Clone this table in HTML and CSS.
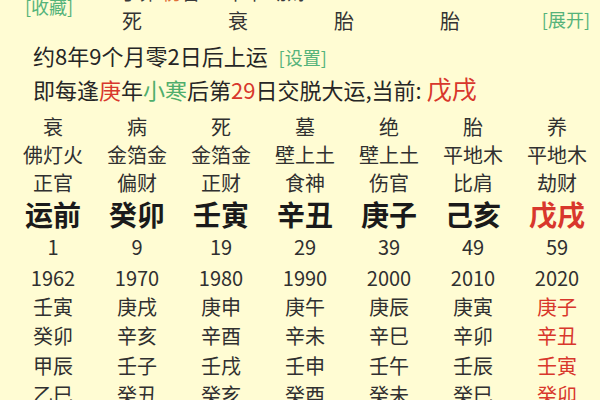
FILE: index.html
```html
<!DOCTYPE html>
<html lang="zh-CN">
<head>
<meta charset="utf-8">
<title>大运</title>
<link rel="stylesheet" href="styles.css">
</head>
<body>
<div class="page">
  <div class="top">
    <div class="fav link">[收藏]</div>
    <div class="frag"><span>丁卯</span> <span class="orange">伤</span>官</div>
    <div class="frag"><span>甲午</span> 劫财</div>
    <div class="frag"></div>
    <div class="frag"></div>
    <div class="frag"></div>
    <div class="stage">死</div>
    <div class="stage">衰</div>
    <div class="stage">胎</div>
    <div class="stage">胎</div>
    <div class="expand link">[展开]</div>
  </div>
  <div class="line l1">约8年9个月零2日后上运 <span class="link small">[设置]</span></div>
  <div class="line l2">即每逢<span class="red">庚</span>年<span class="green">小寒</span>后第<span class="red">29</span>日交脱大运,当前: <span class="red big">戊戌</span></div>
  <div class="grid">
    <div>衰</div><div>病</div><div>死</div><div>墓</div><div>绝</div><div>胎</div><div>养</div>
    <div>佛灯火</div><div>金箔金</div><div>金箔金</div><div>壁上土</div><div>壁上土</div><div>平地木</div><div>平地木</div>
    <div>正官</div><div>偏财</div><div>正财</div><div>食神</div><div>伤官</div><div>比肩</div><div>劫财</div>
    <div class="gz">运前</div><div class="gz">癸卯</div><div class="gz">壬寅</div><div class="gz">辛丑</div><div class="gz">庚子</div><div class="gz">己亥</div><div class="gz red">戊戌</div>
    <div>1</div><div>9</div><div>19</div><div>29</div><div>39</div><div>49</div><div>59</div>
    <div>1962</div><div>1970</div><div>1980</div><div>1990</div><div>2000</div><div>2010</div><div>2020</div>
    <div>壬寅</div><div>庚戌</div><div>庚申</div><div>庚午</div><div>庚辰</div><div>庚寅</div><div class="red">庚子</div>
    <div>癸卯</div><div>辛亥</div><div>辛酉</div><div>辛未</div><div>辛巳</div><div>辛卯</div><div class="red">辛丑</div>
    <div>甲辰</div><div>壬子</div><div>壬戌</div><div>壬申</div><div>壬午</div><div>壬辰</div><div class="red">壬寅</div>
    <div>乙巳</div><div>癸丑</div><div>癸亥</div><div>癸酉</div><div>癸未</div><div>癸巳</div><div class="red">癸卯</div>
  </div>
</div>
</body>
</html>
```
FILE: styles.css
```css
html, body {
  margin: 0;
  padding: 0;
  background: #fffcd3;
  overflow: hidden;
}
body {
  width: 600px;
  height: 400px;
  font-family: "Noto Sans CJK SC", "Noto Sans", sans-serif;
  color: #2b2b2b;
}
.page {
  width: 600px;
}
.top {
  margin-top: -18px;
  display: grid;
  grid-template-columns: 79px repeat(4, 106px) 1fr;
  grid-template-rows: 26px 26px;
}
.fav {
  grid-row: 1 / span 2;
  grid-column: 1;
  align-self: center;
  padding-left: 25px;
  font-size: 18px;
  line-height: 22px;
  margin-top: -4px;
}
.frag {
  font-size: 19px;
  line-height: 26px;
  padding-left: 41px;
  margin-top: -3px;
  white-space: nowrap;
  color: #3a3a3a;
}
.stage {
  font-size: 20px;
  line-height: 26px;
  text-align: center;
  color: #333;
}
.expand {
  font-size: 18px;
  line-height: 26px;
  text-align: right;
  padding-right: 10px;
  margin-top: -2px;
}
.link {
  color: #55b37a;
}
.small {
  font-size: 18px;
  margin-left: 6px;
}
.line {
  font-size: 22px;
  line-height: 31px;
  padding-left: 33px;
  white-space: nowrap;
  color: #262626;
}
.l1 {
  margin-top: 6px;
}
.red {
  color: #d8372c;
}
.green {
  color: #4fae6c;
}
.big {
  font-size: 25px;
}
.grid {
  margin-top: 8px;
  padding-left: 11px;
  display: grid;
  grid-template-columns: repeat(7, 84px);
  grid-template-rows: 28px 27px 29px 34px 32px 29px 29.5px 29.5px 29.5px 29.5px;
  font-size: 20px;
  line-height: 1.2;
  color: #303030;
}
.grid > div {
  display: flex;
  align-items: center;
  justify-content: center;
  white-space: nowrap;
}
.grid > .gz {
  font-size: 28px;
  line-height: 1.15;
  font-weight: bold;
  color: #1a1a1a;
}
.grid > .gz.red {
  color: #d8372c;
}
.orange {
  color: #e0703a;
}
```
